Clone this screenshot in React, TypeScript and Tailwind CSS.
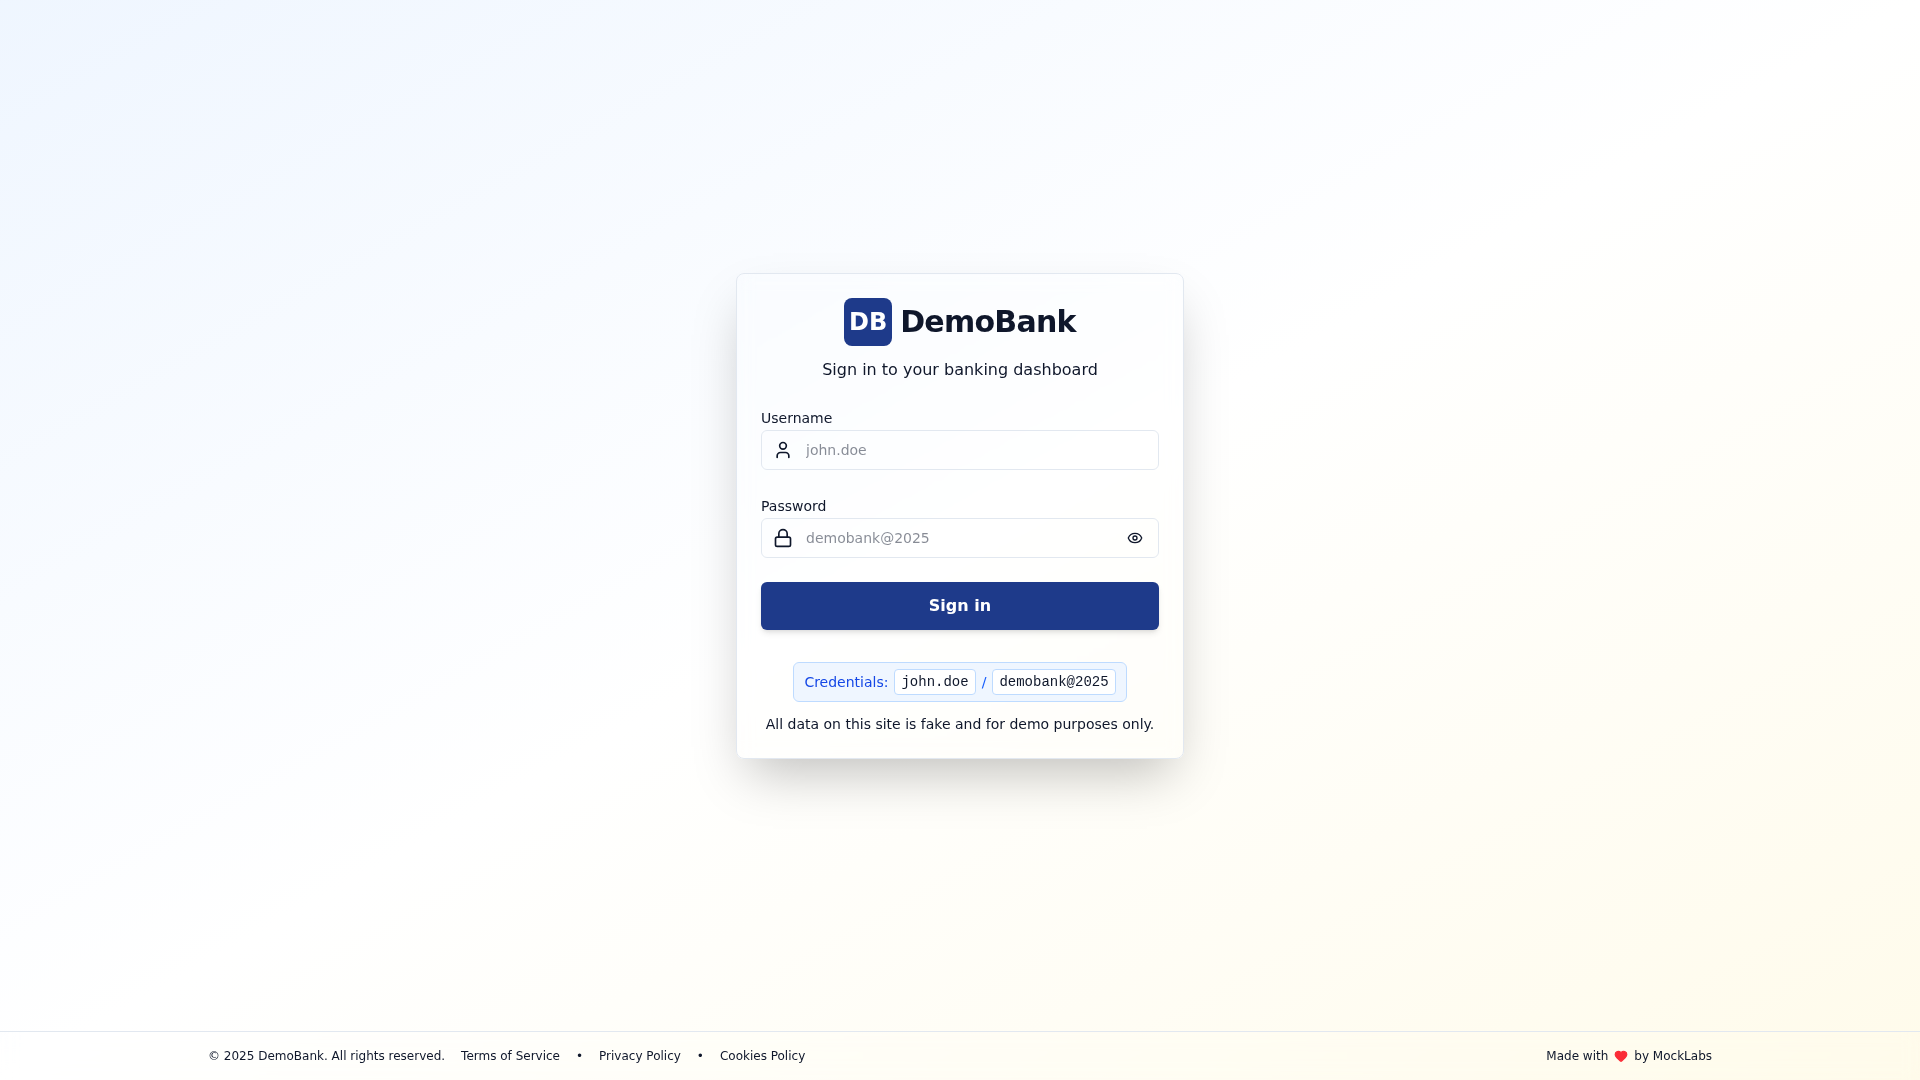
import { useState } from "react";
import { Eye, EyeOff, Heart, Lock, User } from "lucide-react";

const footerLinks = ["Terms of Service", "Privacy Policy", "Cookies Policy"];

const inputClass =
  "block w-full h-10 rounded-md border border-slate-200 bg-transparent pl-11 text-sm text-slate-900 outline-none focus:border-blue-900";

const LoginForm = () => {
  const [username, setUsername] = useState("");
  const [password, setPassword] = useState("");
  const [showPassword, setShowPassword] = useState(false);

  return (
    <form onSubmit={(e) => e.preventDefault()} className="mt-6 space-y-6">
      <div>
        <label htmlFor="username" className="text-sm">
          Username
        </label>
        <div className="relative">
          <User
            size={20}
            className="absolute left-3 top-1/2 -translate-y-1/2 pointer-events-none"
          />
          <input
            id="username"
            type="text"
            placeholder="john.doe"
            value={username}
            onChange={(e) => setUsername(e.target.value)}
            className={`${inputClass} pr-3`}
          />
        </div>
      </div>
      <div>
        <label htmlFor="password" className="text-sm">
          Password
        </label>
        <div className="relative">
          <Lock
            size={20}
            className="absolute left-3 top-1/2 -translate-y-1/2 pointer-events-none"
          />
          <input
            id="password"
            type={showPassword ? "text" : "password"}
            placeholder="demobank@2025"
            value={password}
            onChange={(e) => setPassword(e.target.value)}
            className={`${inputClass} pr-12`}
          />
          <button
            type="button"
            aria-label={showPassword ? "Hide password" : "Show password"}
            onClick={() => setShowPassword(!showPassword)}
            className="absolute right-2 top-1/2 -translate-y-1/2 p-2 rounded-md"
          >
            {showPassword ? <EyeOff size={16} /> : <Eye size={16} />}
          </button>
        </div>
      </div>
      <button
        type="submit"
        className="w-full h-12 rounded-md bg-[#1e3a8a] text-white font-semibold shadow-md hover:bg-blue-800"
      >
        Sign in
      </button>
    </form>
  );
};

const Credential = ({ value }: { value: string }) => (
  <code className="rounded border border-blue-200 bg-white px-1.5 py-0.5 font-['Liberation_Mono',monospace] text-slate-900">
    {value}
  </code>
);

const Footer = () => {
  return (
    <footer className="border-t border-slate-200 backdrop-blur-sm">
      <div className="max-w-screen-2xl mx-auto p-4 flex items-center justify-between text-xs">
        <div className="flex items-center gap-4">
          <p>© 2025 DemoBank. All rights reserved.</p>
          <ul className="flex items-center gap-4">
            {footerLinks.map((link, index) => (
              <li key={link} className="flex items-center gap-4">
                {index > 0 && <span>•</span>}
                <a href="#" className="hover:underline">
                  {link}
                </a>
              </li>
            ))}
          </ul>
        </div>
        <p className="flex items-center gap-1.5">
          Made with
          <Heart size={14} className="fill-red-500 text-red-500" />
          by MockLabs
        </p>
      </div>
    </footer>
  );
};

const App = () => {
  return (
    <div className="min-h-screen flex flex-col bg-linear-to-br from-blue-50 via-white to-amber-50 font-['DejaVu_Sans',sans-serif] text-slate-900">
      <main className="flex-1 flex items-center justify-center">
        <div className="w-full max-w-md rounded-lg border border-slate-200 bg-white/10 p-6 shadow-2xl backdrop-blur-sm">
          <div className="text-center">
            <div className="flex items-center justify-center gap-2">
              <div className="size-12 rounded-lg bg-[#1e3a8a] flex items-center justify-center text-2xl font-bold text-white">
                DB
              </div>
              <h1 className="text-3xl font-bold tracking-tight">DemoBank</h1>
            </div>
            <p className="mt-3">Sign in to your banking dashboard</p>
          </div>
          <LoginForm />
          <div className="mt-8 flex flex-col items-center gap-3 text-sm">
            <div className="flex items-center gap-1.5 rounded-md border border-blue-200 bg-blue-50 px-2.5 py-1.5">
              <span className="text-blue-700">Credentials:</span>
              <Credential value="john.doe" />
              <span className="text-blue-600">/</span>
              <Credential value="demobank@2025" />
            </div>
            <p>All data on this site is fake and for demo purposes only.</p>
          </div>
        </div>
      </main>
      <Footer />
    </div>
  );
};

export default App;
